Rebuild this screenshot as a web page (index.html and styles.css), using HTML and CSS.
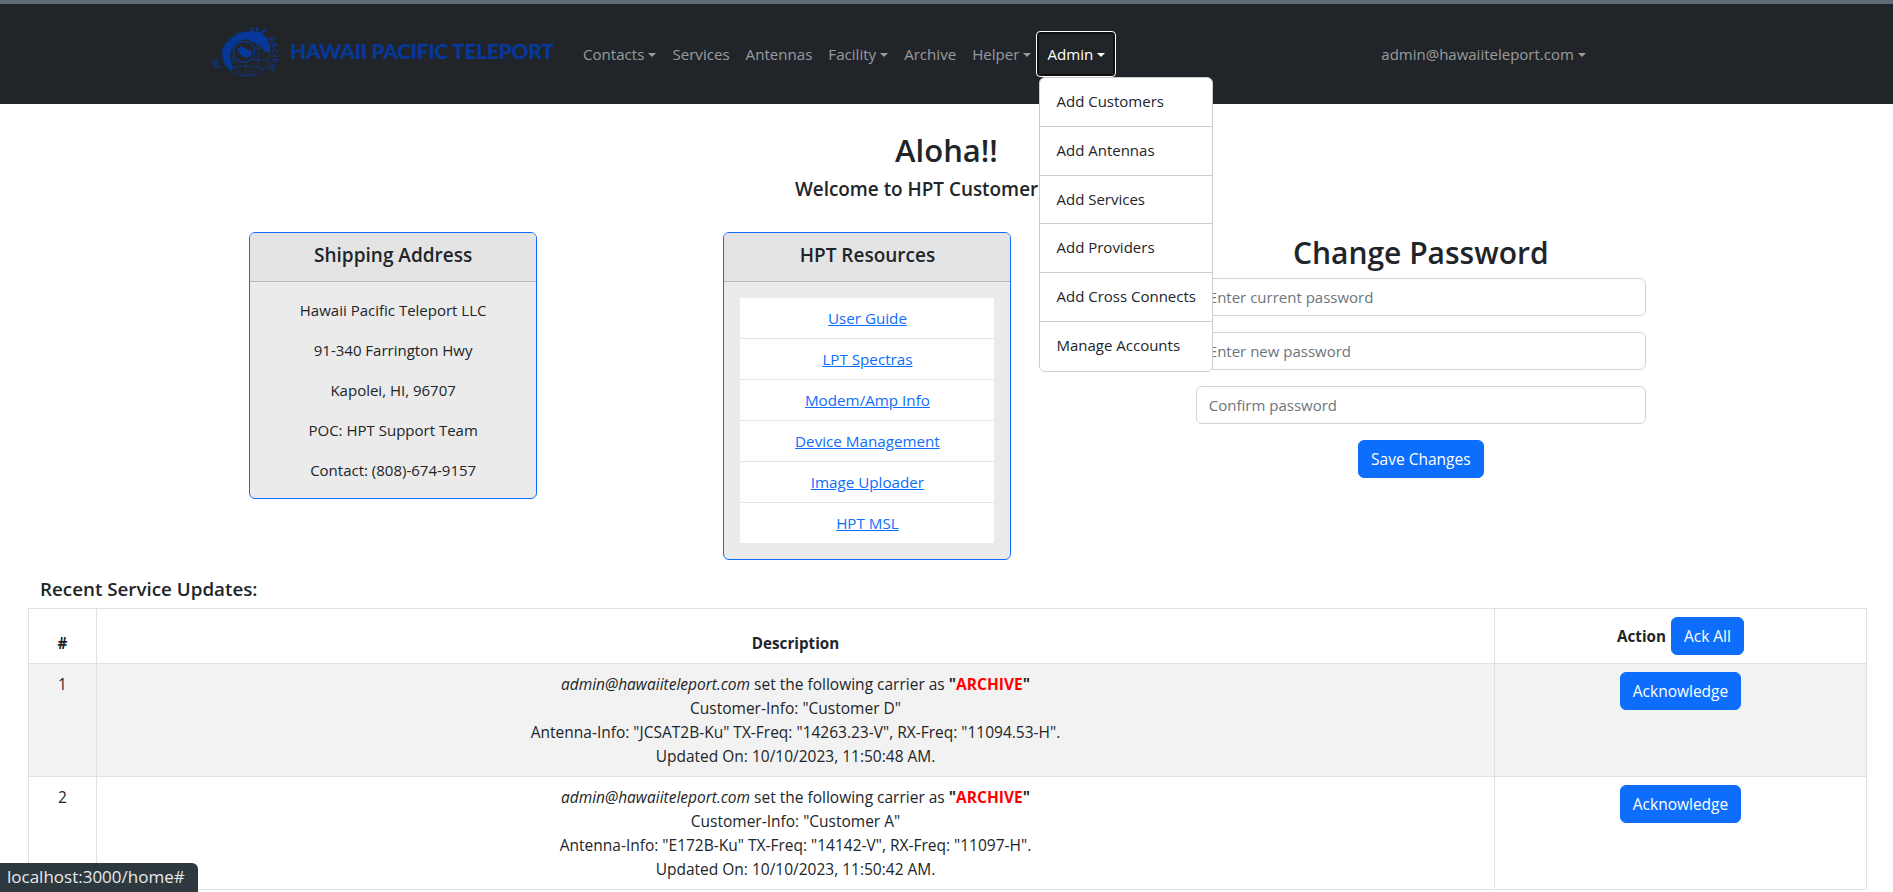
FILE: index.html
```html
<!DOCTYPE html>
<html lang="en">
<head>
  <meta charset="UTF-8" />
  <title>Hawaii Pacific Teleport</title>
  <link rel="stylesheet" href="styles.css">
</head>
<body>
  <nav class="navbar">
    <a class="brand" href="#">
      <svg class="brand-logo" viewBox="0 0 72 56" aria-hidden="true">
        <defs>
          <path id="arc-right" d="M58 13A27 27 0 0 1 52 50"/>
          <path id="arc-left" d="M11 42A29 29 0 0 1 11 14"/>
        </defs>
        <g fill="none" stroke="#0a3a8c" stroke-width="0.7">
          <ellipse cx="36" cy="28" rx="24" ry="22"/>
          <ellipse cx="36" cy="28" rx="13" ry="22"/>
          <path d="M13 22H59M13 34H59M19 13C28 17 44 17 53 13M19 43C28 39 44 39 53 43M36 6V16M36 38V50"/>
        </g>
        <g fill="#06389a">
          <path d="M20 13L30 7L42 5L50 6L56 11L60 18L60 26L55 26L51 20L45 17L39 14L36 13L29 15L24 19Z"/>
          <path d="M12 26L16 17L21 14L24 18L21 24L20 32L23 42L21 45L15 38Z"/>
          <path d="M40 2L42 1L43 4L41 5ZM46 1L47 1L48 5L46 5Z"/>
          <path d="M50 6L55 3L56 4L52 8Z"/>
        </g>
        <circle cx="34" cy="26" r="10.5" fill="#212529" stroke="#06389a" stroke-width="1.1"/>
        <path fill="#06389a" d="M27 24L31 20L35 22L38 24L41 25L42 29L37 32L33 31L30 28Z"/>
        <text class="logo-ring"><textPath href="#arc-right">PACIFIC</textPath></text>
        <text class="logo-ring"><textPath href="#arc-left">JR:</textPath></text>
      </svg>
      <span class="brand-name">HAWAII PACIFIC TELEPORT</span>
    </a>
    <ul class="nav">
      <li><a class="nav-link caret" href="#">Contacts</a></li>
      <li><a class="nav-link" href="#">Services</a></li>
      <li><a class="nav-link" href="#">Antennas</a></li>
      <li><a class="nav-link caret" href="#">Facility</a></li>
      <li><a class="nav-link" href="#">Archive</a></li>
      <li><a class="nav-link caret" href="#">Helper</a></li>
      <li class="nav-open">
        <a class="nav-link caret active" href="#">Admin</a>
        <div class="dropdown">
          <a href="#">Add Customers</a>
          <a href="#">Add Antennas</a>
          <a href="#">Add Services</a>
          <a href="#">Add Providers</a>
          <a href="#">Add Cross Connects</a>
          <a href="#">Manage Accounts</a>
        </div>
      </li>
    </ul>
    <a class="nav-link caret user" href="#">admin@hawaiiteleport.com</a>
  </nav>

  <main>
    <h1 class="greeting">Aloha!!</h1>
    <h2 class="welcome">Welcome to HPT Customer Portal</h2>

    <div class="panels">
      <section class="card-col">
        <div class="card">
          <div class="card-header">Shipping Address</div>
          <div class="card-body">
            <p>Hawaii Pacific Teleport LLC</p>
            <p>91-340 Farrington Hwy</p>
            <p>Kapolei, HI, 96707</p>
            <p>POC: HPT Support Team</p>
            <p>Contact: (808)-674-9157</p>
          </div>
        </div>
      </section>

      <section class="card-col">
        <div class="card">
          <div class="card-header">HPT Resources</div>
          <div class="card-body">
            <ul class="link-list">
              <li><a href="#">User Guide</a></li>
              <li><a href="#">LPT Spectras</a></li>
              <li><a href="#">Modem/Amp Info</a></li>
              <li><a href="#">Device Management</a></li>
              <li><a href="#">Image Uploader</a></li>
              <li><a href="#">HPT MSL</a></li>
            </ul>
          </div>
        </div>
      </section>

      <section class="password">
        <h2>Change Password</h2>
        <input type="password" placeholder="Enter current password" />
        <input type="password" placeholder="Enter new password" />
        <input type="password" placeholder="Confirm password" />
        <button class="btn">Save Changes</button>
      </section>
    </div>

    <h3 class="updates-title">Recent Service Updates:</h3>
    <table class="updates">
      <thead>
        <tr>
          <th class="col-num">#</th>
          <th>Description</th>
          <th class="col-action">Action <button class="btn">Ack All</button></th>
        </tr>
      </thead>
      <tbody>
        <tr class="striped">
          <td>1</td>
          <td>
            <em>admin@hawaiiteleport.com</em> set the following carrier as <strong>"<span class="flag">ARCHIVE</span>"</strong><br>
            Customer-Info: "Customer D"<br>
            Antenna-Info: "JCSAT2B-Ku" TX-Freq: "14263.23-V", RX-Freq: "11094.53-H".<br>
            Updated On: 10/10/2023, 11:50:48 AM.
          </td>
          <td><button class="btn">Acknowledge</button></td>
        </tr>
        <tr>
          <td>2</td>
          <td>
            <em>admin@hawaiiteleport.com</em> set the following carrier as <strong>"<span class="flag">ARCHIVE</span>"</strong><br>
            Customer-Info: "Customer A"<br>
            Antenna-Info: "E172B-Ku" TX-Freq: "14142-V", RX-Freq: "11097-H".<br>
            Updated On: 10/10/2023, 11:50:42 AM.
          </td>
          <td><button class="btn">Acknowledge</button></td>
        </tr>
      </tbody>
    </table>
  </main>

  <div class="status-bar">localhost:3000/home#</div>
</body>
</html>
```

FILE: styles.css
```css
* {
  box-sizing: border-box;
}
html, body {
  height: 892px;
  overflow: hidden;
}
body {
  margin: 0;
  font-family: "Open Sans", "Noto Sans", Arial, sans-serif;
  font-size: 15px;
  line-height: 24px;
  color: #212529;
  background: #fff;
}
a {
  text-decoration: none;
}

/* top bar */
.navbar {
  display: flex;
  align-items: center;
  height: 104px;
  padding-left: 210px;
  background: #212529;
  border-top: 4px solid #5c6b75;
}
.brand {
  display: flex;
  align-items: center;
  width: 365px;
  flex-shrink: 0;
}
.brand-logo {
  width: 72px;
  height: 56px;
  margin-right: 8px;
}
.logo-ring {
  font-family: Lato, Arial, sans-serif;
  font-size: 8px;
  font-weight: 700;
  letter-spacing: 0.5px;
  fill: #06389a;
}
.brand-name {
  margin-bottom: 6px;
  font-family: Lato, Arial, sans-serif;
  font-size: 21px;
  font-weight: 900;
  letter-spacing: -0.3px;
  color: #06389a;
  white-space: nowrap;
}
.nav {
  display: flex;
  align-items: center;
  margin: 0;
  padding: 0;
  font-size: 15.1px;
  list-style: none;
}
.nav-link {
  display: block;
  padding: 8px;
  color: rgba(255, 255, 255, 0.55);
  white-space: nowrap;
}
.caret::after {
  content: "";
  display: inline-block;
  margin-left: 4px;
  vertical-align: 3px;
  border-top: 4.8px solid;
  border-left: 4.8px solid transparent;
  border-right: 4.8px solid transparent;
}
.nav-link.active {
  padding: 10px;
  color: #fff;
  border: 1px solid #fff;
  border-radius: 4px;
  box-shadow: inset 0 0 0 2px #111;
}
.nav-open {
  position: relative;
  margin-left: -3px;
}
.dropdown {
  position: absolute;
  top: 46px;
  left: 3px;
  z-index: 5;
  width: 174px;
  font-size: 15px;
  background: #fff;
  border: 1px solid #ccc;
  border-radius: 6px;
}
.dropdown a {
  display: block;
  height: 48.8px;
  padding: 11px 16px;
  color: #212529;
  white-space: nowrap;
  border-bottom: 1px solid #ccc;
}
.dropdown a:last-child {
  border-bottom: 0;
}
.user {
  margin-left: 257px;
}

/* headings */
.greeting {
  margin: 24px 0 0;
  font-size: 31px;
  font-weight: 600;
  line-height: 44px;
  text-align: center;
}
.welcome {
  margin: 5px 0 0;
  font-size: 18.9px;
  font-weight: 600;
  line-height: 24px;
  text-align: center;
}

/* cards + password form */
.panels {
  display: grid;
  grid-template-columns: 3fr 3fr 4fr;
  align-items: start;
  margin: 31px 156px 0;
}
.card-col {
  display: flex;
  justify-content: center;
}
.card {
  width: 288px;
  background: #ebebeb;
  border: 1px solid #0d6efd;
  border-radius: 6px;
}
.card-header {
  height: 49px;
  padding: 8px 16px;
  font-size: 19px;
  font-weight: 600;
  line-height: 28px;
  text-align: center;
  background: #e4e4e4;
  border-bottom: 1px solid #b8b8b8;
  border-radius: 5px 5px 0 0;
}
.card-body {
  padding: 16px;
  text-align: center;
}
.card-body p {
  margin: 0 0 16px;
}
.card-body p:last-child {
  margin-bottom: 0;
}
.link-list {
  margin: 0;
  padding: 0;
  font-size: 15.2px;
  list-style: none;
}
.link-list li {
  padding: 8px 16px;
  background: #fff;
  border-bottom: 1px solid #e4e4e4;
}
.link-list li:last-child {
  border-bottom: 0;
}
.link-list a {
  color: #0d6efd;
  text-decoration: underline;
}
.password {
  display: flex;
  flex-direction: column;
  align-items: center;
}
.password h2 {
  margin: 2px 0 6px;
  font-size: 30px;
  font-weight: 600;
  line-height: 38px;
}
.password input {
  width: 450px;
  height: 38px;
  margin-bottom: 16px;
  padding: 6px 12px;
  font: inherit;
  border: 1px solid #ced4da;
  border-radius: 6px;
}
.password input::placeholder {
  color: #6c757d;
}
.btn {
  height: 38px;
  padding: 6px 12px;
  font-family: inherit;
  font-size: 15.5px;
  font-weight: 400;
  color: #fff;
  background: #0d6efd;
  border: 1px solid #0d6efd;
  border-radius: 6px;
}

/* table */
.updates-title {
  margin: 17px 0 7px 40px;
  font-size: 18.8px;
  font-weight: 600;
  line-height: 24px;
}
.updates {
  width: 1839px;
  margin-left: 28px;
  font-size: 15.5px;
  border-collapse: collapse;
  table-layout: fixed;
}
.updates th,
.updates td {
  padding: 8px;
  text-align: center;
  vertical-align: top;
  border: 1px solid #dee2e6;
}
.updates th {
  font-size: 15.2px;
  vertical-align: bottom;
}
.col-num {
  width: 68px;
}
.col-action {
  width: 372px;
}
.col-action .btn {
  margin-left: 1px;
}
.striped td {
  background: #f2f2f2;
}
.flag {
  color: #f00;
}

/* link preview, bottom left */
.status-bar {
  position: fixed;
  left: 0;
  bottom: 0;
  z-index: 10;
  height: 29px;
  padding: 2px 13px 0 7px;
  font-size: 17px;
  color: #e8eaed;
  background: #2d383f;
  border-radius: 0 6px 0 0;
}
```
